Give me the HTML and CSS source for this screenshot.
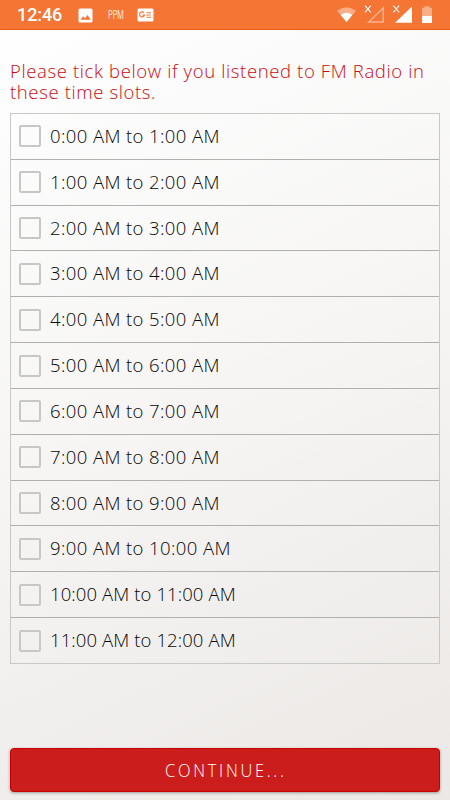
FILE: index.html
```html
<!DOCTYPE html>
<html lang="en">
<head>
<meta charset="utf-8">
<title>Radio time slots</title>
<link rel="stylesheet" href="styles.css">
</head>
<body>
<header class="status">
  <span class="clock">12:46</span>
  <svg class="picture" width="15" height="15" viewBox="0 0 15 15"><rect x="0.5" y="0.5" width="14" height="14" rx="1.5" fill="#fff"/><path d="M2.5 11.7 5.2 8.2 7 10.3 9.5 7 12.7 11.7Z" fill="#f57535"/></svg>
  <span class="ppm"><span>PPM</span></span>
  <svg class="news" width="17" height="14" viewBox="0 0 17 14"><rect x="0.5" y="0.5" width="16" height="13" rx="1.5" fill="#fff"/><path d="M7 4.8A2.5 2.5 0 1 0 7.5 7H5.2M9.5 4.7H14M9.5 7H13.5M9.5 9.3H14" fill="none" stroke="#f57535" stroke-width="1.1"/></svg>
  <svg class="signals" width="100" height="22" viewBox="0 0 100 22">
    <path d="M1 6.8Q10.5-.3 20 6.8L10.5 18Z" fill="#faae87"/>
    <path d="M4.8 11Q10.5 6.5 16.2 11L10.5 18Z" fill="#fff"/>
    <path d="M31 18.7H48V2.2ZM34.5 17.2H46.5V5.8Z" fill="#fbb28d" fill-rule="evenodd"/>
    <path d="M59 18.7H76V2.4Z" fill="#fff"/>
    <path d="m29 1.7 5.8 6.6m0-6.6L29 8.3M57.3 1.7l5.8 6.6m0-6.6-5.8 6.6" stroke="#fff" stroke-width="1.1"/>
    <path d="M88.5 2.2h5v1.6H96v14.4q0 .8-.8.8h-8.4q-.8 0-.8-.8V3.8h2.5Z" fill="#faae87"/>
    <path d="M86 12h10v6.2q0 .8-.8.8h-8.4q-.8 0-.8-.8Z" fill="#fff"/>
  </svg>
</header>
<main>
  <h1>Please tick below if you listened to FM Radio in<br>these time slots.</h1>
  <ul class="slots">
    <li><label><input type="checkbox"><span>0:00 AM to 1:00 AM</span></label></li>
    <li><label><input type="checkbox"><span>1:00 AM to 2:00 AM</span></label></li>
    <li><label><input type="checkbox"><span>2:00 AM to 3:00 AM</span></label></li>
    <li><label><input type="checkbox"><span>3:00 AM to 4:00 AM</span></label></li>
    <li><label><input type="checkbox"><span>4:00 AM to 5:00 AM</span></label></li>
    <li><label><input type="checkbox"><span>5:00 AM to 6:00 AM</span></label></li>
    <li><label><input type="checkbox"><span>6:00 AM to 7:00 AM</span></label></li>
    <li><label><input type="checkbox"><span>7:00 AM to 8:00 AM</span></label></li>
    <li><label><input type="checkbox"><span>8:00 AM to 9:00 AM</span></label></li>
    <li><label><input type="checkbox"><span>9:00 AM to 10:00 AM</span></label></li>
    <li class="long"><label><input type="checkbox"><span>10:00 AM to 11:00 AM</span></label></li>
    <li class="long"><label><input type="checkbox"><span>11:00 AM to 12:00 AM</span></label></li>
  </ul>
  <button type="button"><span>CONTINUE...</span></button>
</main>
</body>
</html>
```
FILE: styles.css
```css
* { box-sizing: border-box; }
body {
  margin: 0;
  height: 800px;
  display: flex;
  flex-direction: column;
  background: linear-gradient(155deg, #fff 0%, #f7f6f5 45%, #ebe8e5 100%);
  font-family: "Open Sans", "Noto Sans", sans-serif;
  font-weight: 300;
}
.status {
  height: 30px;
  display: flex;
  align-items: center;
  flex: none;
  padding: 1px 0 0 17px;
  background: #f57535;
  border-bottom: 1px solid #ee5b18;
  color: #fff;
}
.clock { width: 61px; font: 500 18px/28px Roboto, sans-serif; letter-spacing: -0.1px; }
.picture { margin-right: 15px; }
.ppm { width: 29px; font: 400 13px/28px Roboto, sans-serif; color: #ffe3d5; }
.ppm span { display: inline-block; transform: scaleX(.57); transform-origin: left; }
.signals { margin-left: auto; margin-right: 14px; }
main { flex: 1; display: flex; flex-direction: column; padding: 30px 10px 8px; }
h1 {
  margin: 0;
  height: 53px;
  font-size: 18.5px;
  line-height: 21px;
  font-weight: 360;
  letter-spacing: .63px;
  color: #cc0a12;
  white-space: nowrap;
}
.slots {
  list-style: none;
  margin: 0;
  padding: 0;
  height: 551px;
  display: grid;
  grid-template-rows: repeat(12, 1fr);
  border: 1px solid #c8c8c7;
  border-bottom: 0;
}
.slots li { border-bottom: 1px solid #b0b0ae; }
.slots li:last-child { border-bottom-color: #c8c8c7; }
label {
  height: 100%;
  display: flex;
  align-items: center;
  padding-left: 8px;
  font-size: 18.5px;
  font-weight: 360;
  line-height: 24px;
  letter-spacing: .4px;
  color: #050505;
}
label span { margin-top: -1px; }
.long label { letter-spacing: .1px; }
input {
  appearance: none;
  width: 22px;
  height: 22px;
  margin: 0 9px 0 0;
  border: 2px solid #c7c7c6;
  border-radius: 2px;
}
button {
  margin: auto 0 0;
  height: 44px;
  padding: 0;
  border: 1px solid #c90000;
  border-radius: 4px;
  background: #cb1d1b;
  box-shadow: 0 1px 3px rgba(0, 0, 0, .35);
  color: #fff;
  font: 360 18px/42px "Open Sans", sans-serif;
  letter-spacing: 3px;
}
button span { display: inline-block; transform: translateX(1px) scaleX(.91); }
```
